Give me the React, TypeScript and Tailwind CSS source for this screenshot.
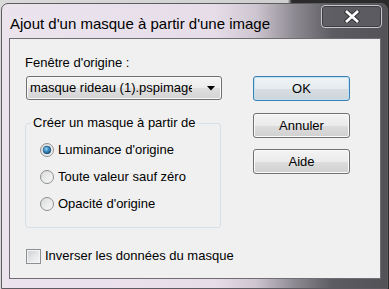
import React from 'react'

function Radio({ checked }: { checked?: boolean }) {
  return (
    <svg width="14" height="14" viewBox="0 0 14 14" className="shrink-0">
      <defs>
        <linearGradient id="rOff" x1="0" y1="0" x2="1" y2="1">
          <stop offset="0" stopColor="#d8d9da" />
          <stop offset="1" stopColor="#fbfbfb" />
        </linearGradient>
        <radialGradient id="rDot" cx="0.4" cy="0.35" r="0.7">
          <stop offset="0" stopColor="#9ad6f5" />
          <stop offset="0.45" stopColor="#3c8fc6" />
          <stop offset="1" stopColor="#1c4f77" />
        </radialGradient>
      </defs>
      <circle cx="7" cy="7" r="6.5" fill="url(#rOff)" stroke="#8e8f8f" strokeWidth="1" />
      {checked && <circle cx="7" cy="7" r="3.9" fill="url(#rDot)" stroke="#1e4a6e" strokeWidth="0.6" />}
    </svg>
  )
}

function Button({ label, primary }: { label: string; primary?: boolean }) {
  return (
    <div
      className={
        primary
          ? 'flex h-[25px] w-[97px] items-center justify-center rounded-[3px] border border-[#3c7fb1] bg-[linear-gradient(to_bottom,#eef3f6_0%,#e5ebee_50%,#d7dee2_51%,#ccd5da_100%)] text-[13px] text-black shadow-[inset_0_0_0_1px_#bfe2f5]'
          : 'flex h-[25px] w-[97px] items-center justify-center rounded-[3px] border border-[#707070] bg-[linear-gradient(to_bottom,#f3f3f3_0%,#ebebeb_50%,#dddddd_51%,#d0d0d0_100%)] text-[13px] text-black shadow-[inset_0_0_0_1px_#fbfbfb]'
      }
    >
      {label}
    </div>
  )
}

export default function App() {
  return (
    <div className="h-[289px] w-[389px] overflow-hidden bg-[linear-gradient(to_right,#dadada_0%,#cfcfcf_74%,#2b2b2b_75%,#2b2b2b_100%)] pt-[3px] pl-[1px] font-['Liberation_Sans',Arial,sans-serif]">
      <div className="h-[286px] w-[387px] rounded-t-[7px] border border-[#5e5a62] bg-[linear-gradient(to_right,#ebe4ed_0%,#e6dde8_55%,#cdc5cf_66%,#8e8a92_76%,#5c5b61_86%,#525257_100%)]">
        {/* title bar */}
        <div className="flex h-[34px] items-start justify-between">
          <div className="pl-[8px] pt-[11px] text-[15px] leading-[17px] text-black">
            Ajout d'un masque à partir d'une image
          </div>
          <div className="mr-[5px] mt-[1px] flex h-[23px] w-[61px] items-center justify-center rounded-[4px] border border-[#c9c7cc] bg-[#5f5e64]/70 shadow-[inset_0_0_0_1px_#3d3c42]">
            <svg width="16" height="13" viewBox="0 0 16 13">
              <path d="M3 2 L13 11 M13 2 L3 11" stroke="#2f2f33" strokeWidth="4.6" strokeLinecap="square" />
              <path d="M3 2 L13 11 M13 2 L3 11" stroke="#ffffff" strokeWidth="2.8" strokeLinecap="square" />
            </svg>
          </div>
        </div>

        {/* client area */}
        <div className="ml-[7px] flex h-[241px] w-[372px] border border-[#6f6c74] bg-[#f0f0f0] text-[13px] leading-[16px] text-black">
          <div className="flex w-[211px] flex-col pl-[15px]">
            <div className="pt-[16px]">Fenêtre d'origine :</div>
            <div className="ml-[1px] mt-[5px] flex h-[24px] w-[196px] items-center rounded-[3px] border border-[#707070] bg-[linear-gradient(to_bottom,#f4f4f4_0%,#ececec_50%,#dfdfdf_51%,#d3d3d3_100%)] pl-[3px] pr-[6px] shadow-[inset_0_0_0_1px_#fafafa]">
              <span className="w-[162px] overflow-hidden whitespace-nowrap">masque rideau (1).pspimage</span>
              <div className="flex flex-1 justify-end">
                <svg width="8" height="5" viewBox="0 0 8 5">
                  <path d="M0 0 L8 0 L4 4.5 Z" fill="#000" />
                </svg>
              </div>
            </div>
            <fieldset className="mt-[15px] h-[113px] w-[196px] rounded-[3px] border border-[#d5dfe5] pl-[14px]">
              <legend className="ml-[-9px] px-[2px]">Créer un masque à partir de</legend>
              <div className="flex flex-col pt-[5px]">
                <div className="flex h-[27px] items-center gap-[4px]">
                  <Radio checked />
                  <span>Luminance d'origine</span>
                </div>
                <div className="flex h-[27px] items-center gap-[4px]">
                  <Radio />
                  <span>Toute valeur sauf zéro</span>
                </div>
                <div className="flex h-[27px] items-center gap-[4px]">
                  <Radio />
                  <span>Opacité d'origine</span>
                </div>
              </div>
            </fieldset>
            <div className="mt-[20px] flex items-center gap-[4px] whitespace-nowrap pl-[1px]">
              <div className="h-[15px] w-[15px] shrink-0 border border-[#8e8f8f] bg-[linear-gradient(135deg,#c9cdd2_0%,#e4e6e8_50%,#f7f7f7_100%)] shadow-[inset_0_0_0_1px_#f4f4f4]" />
              <span>Inverser les données du masque</span>
            </div>
          </div>
          <div className="ml-[32px] flex flex-col pt-[37px]">
            <Button label="OK" primary />
            <div className="mt-[12px]">
              <Button label="Annuler" />
            </div>
            <div className="mt-[11px]">
              <Button label="Aide" />
            </div>
          </div>
        </div>
      </div>
    </div>
  )
}
